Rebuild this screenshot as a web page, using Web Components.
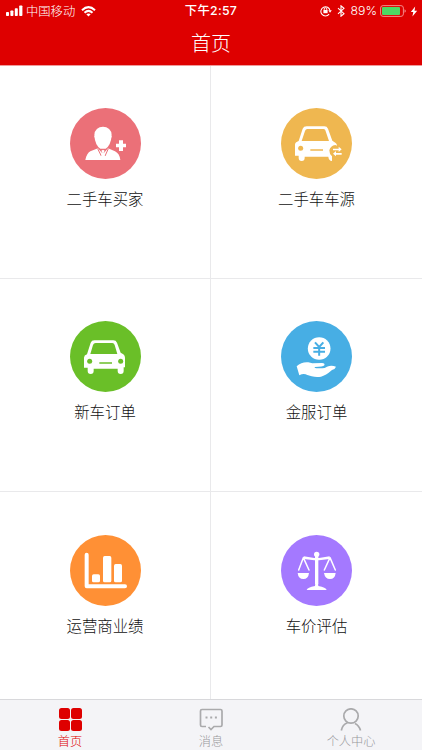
<!DOCTYPE html>
<html lang="zh-CN">
<head>
<meta charset="utf-8">
<title>首页</title>
<style>
html,body{margin:0;height:100%;overflow:hidden}
body{font-family:"Liberation Sans","Noto Sans CJK SC",sans-serif;font-weight:300;background:#fff}
</style>
</head>
<body>
<home-app></home-app>
<script>
const icons = {
buyer: `<ellipse cx="129" cy="105" rx="26" ry="25"/><path d="M103 108q3 29 18 38h16q15-9 18-38z"/>
<path d="M76 180Q80 160 91 154L114 145L129 162L144 145L165 154Q179 161 181 180z"/>
<path d="M113 146L124 168M145 146L135 168" fill="none" stroke="var(--c)" stroke-width="3"/>
<path d="M124 152l5-3 5 3-3 6 3 9-5 5-5-5 3-9z"/>
<path d="M177 121h12v10h9v11h-9v11h-12v-11h-9v-11h9z"/>`,
car: `<path fill-rule="evenodd" d="M103 82H160Q168 82 171 89L182 119L190 124Q195 128 195 134V163H191V174Q191 183 182 183Q173 183 173 174V167H101V174Q101 183 92 183Q83 183 83 174V164H72V134Q72 127 81 124L92 89Q95 82 103 82zM107 90Q101 90 99 96L91 123H172L164 96Q162 90 157 90z"/>
<circle cx="89" cy="145" r="7.5" fill="var(--c)"/><circle cx="182" cy="145" r="7.5" fill="var(--c)"/><path d="M118 150h38" stroke="var(--c)" stroke-width="4.5"/>`,
swap: `<path fill-rule="evenodd" d="M107 79H160Q168 79 171 86L184 122L193 128Q198 131 198 137L193 135Q178 137 175 151Q175 163 183 169V183Q173 182 172 170H101V174Q101 183 92 183Q83 183 83 174V167H72V134Q72 127 83 123L95 86Q98 79 107 79zM109 87Q104 87 102 93L92 123H174L163 91Q161 87 157 87z"/>
<circle cx="89" cy="145" r="7.5" fill="var(--c)"/><path d="M118 150h38" stroke="var(--c)" stroke-width="4.5"/>
<path d="M186 146h17v-6l9 8-9 8v-5h-17zM212 159h-17v-6l-9 8 9 8v-5h17z"/>`,
finance: `<circle cx="144.500" cy="106.500" r="34"/><path d="M132 88L144.500 102L157 88M127 105h35M127 116h35M144.500 101V128" fill="none" stroke="var(--c)" stroke-width="6"/>
<path d="M77 160Q92 146 112 148L124 151L153 150Q163 151 160 157Q156 162 132 162Q128 165 136 166L154 166Q161 166 168 161Q181 156 195 161Q193 168 183 171Q164 188 150 191Q137 194 122 190L109 186Q98 180 85 187z"/>`,
bars: `<path d="M80 83V178H195" fill="none" stroke="#fff" stroke-width="12" stroke-linecap="round" stroke-linejoin="round"/>
<rect x="96" y="142" width="24" height="24" rx="5"/><rect x="129" y="87" width="25" height="79" rx="5"/><rect x="162" y="111" width="24" height="55" rx="5"/>`,
scale: `<circle cx="137" cy="82" r="8"/><path d="M132 85h10v86h-10z"/><path d="M98 88L130 93H144L176 88V96L144 100H130L98 96z"/>
<path d="M97 92L83 129M97 92L114 129M177 92L160 129M177 92L193 129" fill="none" stroke="#fff" stroke-width="4.500" stroke-linecap="round"/>
<path d="M80 138h34q-2 18-17 18t-17-18zM159 138h35q-2 18-17 18t-18-18z"/><path d="M107 189Q109 181 132 177L133 168H141L142 177Q165 181 167 189z"/>`
};

const define = (name, markup) => customElements.define(name, class extends HTMLElement {
  connectedCallback() {
    if (this.shadowRoot) return;
    this.attachShadow({mode:"open"}).innerHTML = typeof markup === "function" ? markup(this) : markup;
  }
});

define("status-bar", `<style>
:host{display:grid;grid-template-columns:1fr auto 1fr;align-items:center;height:22px;color:#fff;font-size:12.300px;line-height:22px;white-space:nowrap}
div{display:flex;align-items:center;height:22px}svg{display:block;flex:none}
.l{padding-left:6px}.net{margin:0 6px 0 3px;padding-top:1px}
.time{font-size:12.300px;font-weight:500;font-family:Inter,"Noto Sans CJK SC",sans-serif;letter-spacing:.3px}
.r{justify-content:flex-end;padding-right:4px;font-family:Inter,sans-serif;font-size:12.300px}.bt{margin:0 6px 0 5px}.bat{margin:0 4px 0 3px}
</style>
<div class="l"><svg width="17" height="12" fill="#fff"><rect y="7" width="3" height="4" rx=".8"/><rect x="4.400" y="5.500" width="3" height="5.500" rx=".8"/><rect x="8.800" y="3.200" width="3" height="7.800" rx=".8"/><rect x="13.200" y=".5" width="3.200" height="10.500" rx=".8"/></svg>
<span class="net">中国移动</span>
<svg width="15" height="11" viewBox="0 0 15 11" fill="none" stroke="#fff" stroke-width="2"><path d="M1 4.200Q7.500-1.900 14 4.200M3.500 6.700Q7.500 3 11.500 6.700"/><path d="M5.300 8.300Q7.500 6.500 9.700 8.300L7.500 10.500z" fill="#fff" stroke="none"/></svg></div>
<span class="time">下午2:57</span>
<div class="r"><svg width="12" height="12" viewBox="0 0 12 12" fill="none" stroke="#fff"><path d="M9.100 9.200A4.600 4.600 0 1 1 10 5.500" stroke-width="1.100"/><path d="M8.300 5.200h3.500L10 7.700z" fill="#fff" stroke="none"/><rect x="3.400" y="5" width="4.200" height="3.200" fill="#fff" stroke="none"/><path d="M4.200 5V4a1.300 1.300 0 0 1 2.600 0v1" stroke-width=".9"/></svg>
<svg class="bt" width="8" height="12" viewBox="0 0 8 12" fill="none" stroke="#fff" stroke-width="1.100"><path d="M1 3.200L7 8.700L4 11.200V.8L7 3.300L1 8.800"/></svg>
<span>89%</span>
<svg class="bat" width="26" height="12" viewBox="0 0 26 12"><rect x=".6" y=".6" width="22.800" height="10.800" rx="2.500" fill="none" stroke="#f48a8a"/><rect x="2" y="2" width="18" height="8" rx="1" fill="#4cd964"/><path d="M24.500 4.200q1.300.6 1.300 1.800t-1.300 1.800z" fill="#f48a8a"/></svg>
<svg width="8" height="11" viewBox="0 0 8 11"><path d="M5.200.5L.8 6H3.300L2.400 10.500L7.200 4.700H4.500z" fill="#fff"/></svg></div>`);

define("nav-header", `<style>
:host{display:flex;flex-direction:column;height:65px;box-sizing:content-box;background:#de0000;border-bottom:1px solid #f09a9a;color:#fff}
h1{margin:0;flex:1;display:flex;align-items:center;justify-content:center;font-size:20px;font-weight:inherit;line-height:41px;padding-top:2px}
</style><status-bar></status-bar><h1><slot></slot></h1>`);

define("menu-tile", el => `<style>
:host{--c:${el.getAttribute("color")};display:flex;flex-direction:column;align-items:center;box-sizing:border-box;padding-top:42px;background:#fff;color:#111;font-size:15.400px;line-height:24px}
svg{display:block;width:71px;height:71px;margin-bottom:9px}
</style><svg viewBox="30 24 213 213" fill="#fff"><circle cx="136.500" cy="130.500" r="106.500" fill="var(--c)"/>${icons[el.getAttribute("icon")]}</svg><span><slot></slot></span>`);

define("tab-item", `<style>
:host{display:flex;flex-direction:column;align-items:center;padding-top:8px;color:#98989b;font-size:12.200px;line-height:18px}
:host([active]){color:#de0000}
::slotted(svg){display:block;width:24px;height:24px;margin-bottom:1px}
</style><slot name="icon"></slot><span><slot></slot></span>`);

define("tab-bar", `<style>
:host{display:grid;grid-template-columns:140px 142px 138px;height:50px;background:#f4f4f7;border-top:1px solid #d8d8db}
</style><slot></slot>`);

define("home-app", `<style>
:host{display:flex;flex-direction:column;width:422px;height:750px}
main{flex:1;display:grid;grid-template-columns:210px 211px;grid-template-rows:212px 212px 1fr;gap:1px;background:#e9e9eb}
menu-tile:nth-child(n+5){padding-top:43px}
</style>
<nav-header>首页</nav-header>
<main>
<menu-tile icon="buyer" color="#eb7078">二手车买家</menu-tile>
<menu-tile icon="swap" color="#efb750">二手车车源</menu-tile>
<menu-tile icon="car" color="#6abf28">新车订单</menu-tile>
<menu-tile icon="finance" color="#47aee4">金服订单</menu-tile>
<menu-tile icon="bars" color="#ff9035">运营商业绩</menu-tile>
<menu-tile icon="scale" color="#a479ff">车价评估</menu-tile>
</main>
<tab-bar>
<tab-item active><svg slot="icon" viewBox="0 0 24 24" fill="#de0000"><rect x="1" y="0" width="11" height="11" rx="2.500"/><rect x="13" y="0" width="11" height="11" rx="2.500"/><rect x="1" y="12" width="11" height="11" rx="2.500"/><rect x="13" y="12" width="11" height="11" rx="2.500"/></svg>首页</tab-item>
<tab-item><svg slot="icon" viewBox="0 0 24 24" fill="none" stroke="#aaaaac" stroke-width="1.700"><path d="M7 18.500H3Q1.500 18.500 1.500 17V3Q1.500 1.500 3 1.500H21.500Q23 1.500 23 3V17Q23 18.500 21.500 18.500H15L12 21.500L9.500 19"/><path d="M6.500 9.500h2M11.200 9.500h2M15.900 9.500h2" stroke-width="2"/></svg>消息</tab-item>
<tab-item><svg slot="icon" viewBox="0 0 24 24" fill="none" stroke="#aaaaac" stroke-width="1.700"><circle cx="12" cy="8" r="7.200"/><path d="M2.300 22.500Q3.500 16.500 8.500 14.800M16 15.600Q20 17.500 21.500 22.500"/></svg>个人中心</tab-item>
</tab-bar>`);
</script>
</body>
</html>
